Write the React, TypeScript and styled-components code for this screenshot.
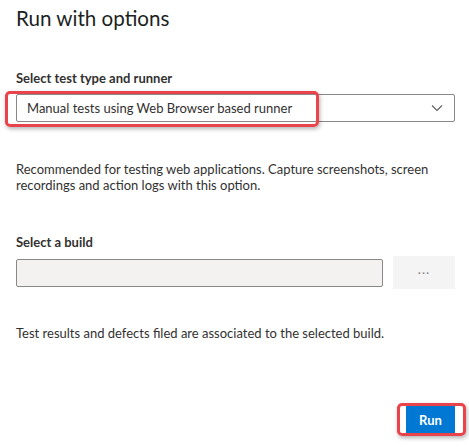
import React from "react";
import styled, { createGlobalStyle } from "styled-components";

const Global = createGlobalStyle`
  html, body { margin: 0; padding: 0; background: #ffffff; }
  body { font-family: "Segoe UI", Lato, "Liberation Sans", sans-serif; color: #323130; }
`;

const Panel = styled.div`
  width: 469px;
  height: 447px;
  box-sizing: border-box;
  padding: 4px 14px 0 16px;
  display: flex;
  flex-direction: column;
`;

const Title = styled.h1`
  margin: 0;
  font-size: 20.6px;
  line-height: 28px;
  font-weight: 400;
  color: #201f1e;
`;

const Label = styled.div<{ $top: number }>`
  margin-top: ${(p) => p.$top}px;
  font-size: 13px;
  line-height: 18px;
  font-weight: 700;
  color: #323130;
`;

const Annotated = styled.div<{ $top?: number }>`
  position: relative;
  margin-top: ${(p) => p.$top ?? 0}px;
`;

const Highlight = styled.div<{ $l: number; $t: number; $w: number; $h: number }>`
  position: absolute;
  left: ${(p) => p.$l}px;
  top: ${(p) => p.$t}px;
  width: ${(p) => p.$w}px;
  height: ${(p) => p.$h}px;
  box-sizing: border-box;
  border: 3px solid #e9434b;
  border-radius: 5px;
  box-shadow: 1px 2px 4px rgba(0, 0, 0, 0.3);
  pointer-events: none;
`;

const Dropdown = styled.div`
  height: 28px;
  box-sizing: border-box;
  border: 1px solid #8a8886;
  border-radius: 2px;
  display: flex;
  align-items: center;
  justify-content: space-between;
  padding: 0 11px 0 10px;
  font-size: 13px;
  color: #323130;
`;

const Description = styled.p<{ $top: number }>`
  margin: ${(p) => p.$top}px 0 0 0;
  font-size: 13px;
  line-height: 16px;
  color: #323130;
`;

const BuildRow = styled.div`
  margin-top: 5px;
  display: flex;
  align-items: center;
  gap: 10px;
`;

const BuildInput = styled.div`
  flex: 1;
  height: 28px;
  box-sizing: border-box;
  border: 1px solid #8a8886;
  border-radius: 2px;
  background: #f3f2f1;
`;

const MoreButton = styled.div`
  width: 62px;
  height: 33px;
  background: #f4f4f4;
  display: flex;
  align-items: center;
  justify-content: center;
  color: #8a8886;
  font-size: 12px;
  letter-spacing: 1px;
`;

const Footer = styled.div`
  margin-top: auto;
  margin-bottom: 14px;
  display: flex;
  justify-content: flex-end;
`;

const RunButton = styled.div`
  width: 49px;
  height: 27px;
  background: #0078d4;
  color: #ffffff;
  font-size: 13px;
  font-weight: 700;
  display: flex;
  align-items: center;
  justify-content: center;
`;

const Chevron = () => (
  <svg width="12" height="8" viewBox="0 0 12 8" fill="none">
    <path d="M1 1.5 L6 6.5 L11 1.5" stroke="#605e5c" strokeWidth="1.1" />
  </svg>
);

export default function App() {
  return (
    <>
      <Global />
      <Panel>
        <Title>Run with options</Title>
        <Label $top={37}>Select test type and runner</Label>
        <Annotated $top={7}>
          <Dropdown>
            <span>Manual tests using Web Browser based runner</span>
            <Chevron />
          </Dropdown>
          <Highlight $l={-11} $t={-3} $w={314} $h={36} />
        </Annotated>
        <Description $top={39}>
          Recommended for testing web applications. Capture screenshots, screen
          recordings and action logs with this option.
        </Description>
        <Label $top={40}>Select a build</Label>
        <BuildRow>
          <BuildInput />
          <MoreButton>···</MoreButton>
        </BuildRow>
        <Description $top={36}>
          Test results and defects filed are associated to the selected build.
        </Description>
        <Footer>
          <Annotated>
            <RunButton>Run</RunButton>
            <Highlight $l={-9} $t={-3} $w={69} $h={33} />
          </Annotated>
        </Footer>
      </Panel>
    </>
  );
}
